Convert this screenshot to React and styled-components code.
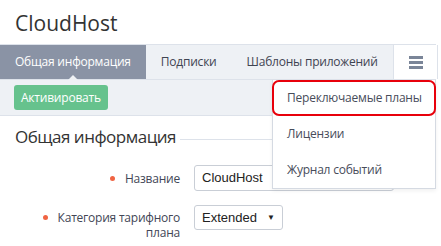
import React from "react";
import styled, { createGlobalStyle } from "styled-components";

const GlobalStyle = createGlobalStyle`
  body {
    margin: 0;
    background: #fff;
    font-family: "Open Sans", "Noto Sans", sans-serif;
    color: #3b3f4a;
  }
`;

const Page = styled.div`
  width: 436px;
  font-size: 12px;
  letter-spacing: -0.22px;
`;

const Title = styled.h1`
  margin: 0;
  height: 44px;
  padding: 8px 0 0 15px;
  box-sizing: border-box;
  font-size: 21px;
  font-weight: 400;
  letter-spacing: 0;
  line-height: 30px;
  color: #333;
`;

const TabBar = styled.div`
  position: relative;
  display: flex;
  height: 36px;
  box-sizing: border-box;
  background: #eef1f5;
  border-top: 1px solid #dde2ea;
  border-bottom: 1px solid #dde2ea;
`;

const Tab = styled.div`
  position: relative;
  flex: none;
  white-space: nowrap;
  padding: 0 15px;
  line-height: 34px;
  color: ${(p) => (p.$active ? "#fff" : "#3f4452")};
  background: ${(p) => (p.$active ? "#8a93a5" : "transparent")};

  ${(p) =>
    p.$active &&
    `
    &::after {
      content: "";
      position: absolute;
      left: 50%;
      bottom: -1px;
      margin-left: -5px;
      border: 5px solid transparent;
      border-bottom-color: #eef1f5;
      border-top: 0;
    }
  `}
`;

const Spacer = styled.div`
  flex: 1;
`;

const MenuCell = styled.div`
  width: 43px;
  flex: none;
  display: flex;
  align-items: center;
  justify-content: center;
  background: #fff;
  border-left: 1px solid #dde2ea;
  border-right: 1px solid #dde2ea;
`;

const Burger = styled.div`
  display: flex;
  flex-direction: column;
  gap: 2px;
  margin-left: 1px;

  span {
    display: block;
    width: 14px;
    height: 3px;
    background: #7a8598;
  }
`;

const Dropdown = styled.div`
  position: absolute;
  top: 35px;
  right: 0;
  width: 164px;
  box-sizing: border-box;
  background: #fff;
  border: 1px solid #d5dae2;
  border-top: 0;
  box-shadow: 0 2px 4px rgba(0, 0, 0, 0.06);
  z-index: 10;
`;

const MenuItem = styled.div`
  height: 36px;
  box-sizing: border-box;
  padding-left: 13px;
  white-space: nowrap;
  line-height: 32px;
  color: #474c5a;
  border: 2px solid ${(p) => (p.$marked ? "#e8000b" : "transparent")};
  border-radius: ${(p) => (p.$marked ? "7px" : "0")};
  margin: 0 -1px;
`;

const Toolbar = styled.div`
  height: 36px;
  box-sizing: border-box;
  padding: 5px 14px 0;
  background: #eef1f5;
  border-bottom: 1px solid #dde2ea;
`;

const Button = styled.button`
  height: 25px;
  padding: 0 7px;
  border: 0;
  border-radius: 3px;
  background: #66c28d;
  color: #fff;
  white-space: nowrap;
  font-family: inherit;
  font-size: 12px;
  letter-spacing: inherit;
`;

const SectionHead = styled.div`
  display: flex;
  align-items: center;
  gap: 4px;
  padding: 8px 0 0 15px;
  font-size: 17px;
  letter-spacing: -0.5px;
  line-height: 26px;
  color: #333;
  white-space: nowrap;

  &::after {
    content: "";
    flex: 1;
    height: 1px;
    margin-top: 4px;
    background: #dde2ea;
  }
`;

const Form = styled.div`
  display: grid;
  grid-template-columns: 180px 1fr;
  column-gap: 14px;
  row-gap: 14px;
  padding-top: 15px;
`;

const Label = styled.div`
  display: flex;
  justify-content: flex-end;
  align-items: flex-start;
  gap: 10px;
  line-height: 15px;
  color: #424656;
  text-align: right;
  padding-top: ${(p) => p.$pad || 0}px;

  &::before {
    content: "";
    flex: none;
    width: 5px;
    height: 5px;
    margin-top: 5px;
    border-radius: 50%;
    background: #f06443;
  }
`;

const Input = styled.div`
  width: 200px;
  height: 26px;
  box-sizing: border-box;
  padding: 0 7px;
  border: 1px solid #c9ced6;
  border-radius: 3px;
  font-family: "Liberation Sans", Arial, sans-serif;
  font-size: 13px;
  letter-spacing: 0;
  line-height: 24px;
  color: #222;
`;

const Select = styled(Input)`
  width: 89px;
  height: 25px;
  display: flex;
  justify-content: space-between;
  line-height: 23px;

  i {
    font-style: normal;
    font-size: 8px;
  }
`;

export default function App() {
  return (
    <Page>
      <GlobalStyle />
      <Title>CloudHost</Title>
      <TabBar>
        <Tab $active>Общая информация</Tab>
        <Tab>Подписки</Tab>
        <Tab>Шаблоны приложений</Tab>
        <Spacer />
        <MenuCell>
          <Burger>
            <span />
            <span />
            <span />
          </Burger>
        </MenuCell>
        <Dropdown>
          <MenuItem $marked>Переключаемые планы</MenuItem>
          <MenuItem>Лицензии</MenuItem>
          <MenuItem>Журнал событий</MenuItem>
        </Dropdown>
      </TabBar>
      <Toolbar>
        <Button>Активировать</Button>
      </Toolbar>
      <SectionHead>Общая информация</SectionHead>
      <Form>
        <Label $pad={6}>Название</Label>
        <Input>CloudHost</Input>
        <Label $pad={5}>
          Категория тарифного
          <br />
          плана
        </Label>
        <Select>
          Extended <i>▼</i>
        </Select>
      </Form>
    </Page>
  );
}
